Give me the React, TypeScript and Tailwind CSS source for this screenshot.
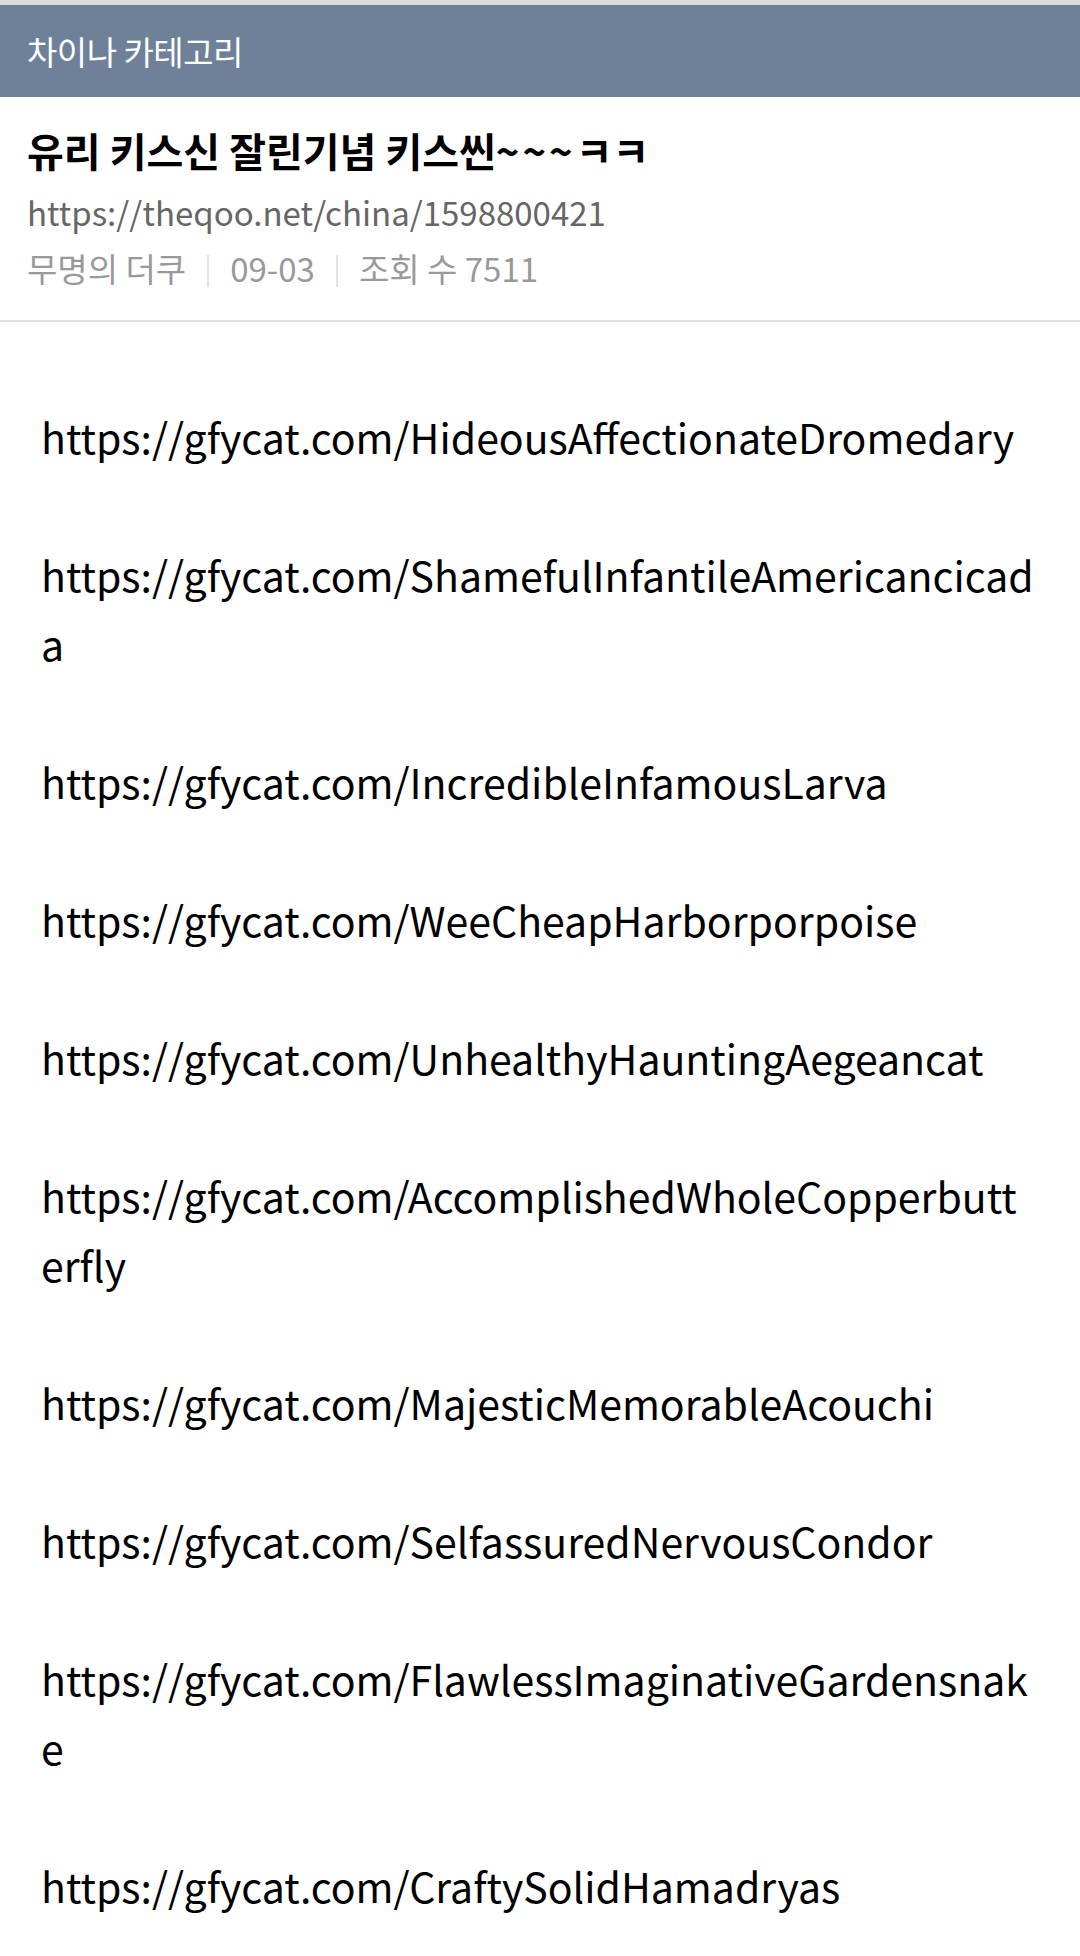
import React from "react";

const links: string[] = [
  "https://gfycat.com/HideousAffectionateDromedary",
  "https://gfycat.com/ShamefulInfantileAmericancicada",
  "https://gfycat.com/IncredibleInfamousLarva",
  "https://gfycat.com/WeeCheapHarborporpoise",
  "https://gfycat.com/UnhealthyHauntingAegeancat",
  "https://gfycat.com/AccomplishedWholeCopperbutterfly",
  "https://gfycat.com/MajesticMemorableAcouchi",
  "https://gfycat.com/SelfassuredNervousCondor",
  "https://gfycat.com/FlawlessImaginativeGardensnake",
  "https://gfycat.com/CraftySolidHamadryas",
];

export default function App() {
  return (
    <div
      className="w-[1080px] h-[1956px] overflow-hidden bg-white"
      style={{ fontFamily: '"Noto Sans CJK KR", "Noto Sans", sans-serif' }}
    >
      <div className="h-[5px] bg-[#dcdcdc]" />
      <div className="h-[92px] bg-[#6f8199] flex items-center px-[27px]">
        <span className="text-white text-[33px] tracking-[-0.5px] leading-none">차이나 카테고리</span>
      </div>
      <div className="px-[27px] pt-[25px] pb-[27px] border-b-2 border-[#e0e0e0]">
        <div className="text-[40px] font-bold text-black leading-[56px]">
          유리 키스신 잘린기념 키스씬<span className="tracking-[3px]">~~~</span>ㅋㅋ
        </div>
        <div className="mt-[9px] text-[33px] text-[#666] leading-[50px]">https://theqoo.net/china/1598800421</div>
        <div className="mt-[6px] flex items-center text-[33px] text-[#999] leading-[50px]">
          <span>무명의 더쿠</span>
          <span className="mx-[21px] mt-[6px] w-[2px] h-[32px] bg-[#e3e3e3]" />
          <span>09-03</span>
          <span className="mx-[21px] mt-[6px] w-[2px] h-[32px] bg-[#e3e3e3]" />
          <span>조회 수 7511</span>
        </div>
      </div>
      <div className="pl-[41px] pr-[46px] pt-[80px] text-[41px] leading-[69px] text-black break-all">
        {links.map((l, i) => (
          <React.Fragment key={i}>
            {i > 0 && <p className="h-[69px]"></p>}
            <p>{l}</p>
          </React.Fragment>
        ))}
      </div>
    </div>
  );
}
